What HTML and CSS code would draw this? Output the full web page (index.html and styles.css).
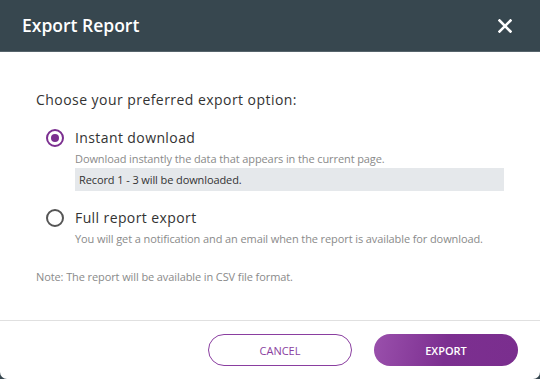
FILE: index.html
```html
<!DOCTYPE html>
<html lang="en">
<head>
  <meta charset="utf-8" />
  <title>Export Report</title>
  <link rel="stylesheet" href="styles.css">
</head>
<body>
  <div class="dialog">
    <div class="dialog-header">
      <h1>Export Report</h1>
      <button class="close" aria-label="Close">
        <svg width="14" height="14" viewBox="0 0 14 14"><path d="M1.5 1.5 L12.5 12.5 M12.5 1.5 L1.5 12.5" stroke="#fff" stroke-width="2.6" stroke-linecap="square"/></svg>
      </button>
    </div>
    <div class="dialog-body">
      <p class="question">Choose your preferred export option:</p>
      <label class="option">
        <span class="radio checked"></span>
        <span class="option-text">
          <span class="option-title">Instant download</span>
          <span class="option-desc">Download instantly the data that appears in the current page.</span>
          <span class="record">Record 1 - 3 will be downloaded.</span>
        </span>
      </label>
      <label class="option">
        <span class="radio"></span>
        <span class="option-text">
          <span class="option-title">Full report export</span>
          <span class="option-desc">You will get a notification and an email when the report is available for download.</span>
        </span>
      </label>
      <p class="note">Note: The report will be available in CSV file format.</p>
    </div>
    <div class="dialog-footer">
      <button class="btn btn-cancel">CANCEL</button>
      <button class="btn btn-export">EXPORT</button>
    </div>
  </div>
</body>
</html>
```

FILE: styles.css
```css
:root {
  --dark: #37474f;
  --purple: #7b2f90;
  --text: #333;
  --text-light: #8a8a8a;
}
html, body {
  margin: 0;
  padding: 0;
  height: 100%;
  background: var(--dark);
  font-family: 'Open Sans', 'Noto Sans', Arial, sans-serif;
  color: var(--text);
}
.dialog {
  width: 540px;
  height: 379px;
  display: flex;
  flex-direction: column;
  background: #fff;
  border-radius: 0 0 7px 7px;
  overflow: hidden;
}
.dialog-header {
  height: 51px;
  flex: none;
  display: flex;
  align-items: center;
  justify-content: space-between;
  padding: 0 28px 0 22px;
  background: var(--dark);
  border-bottom: 1px solid #56646b;
}
.dialog-header h1 {
  margin: 0 0 1px 0;
  font-size: 17.5px;
  font-weight: 600;
  color: #fff;
}
.close {
  background: none;
  border: none;
  padding: 0;
  display: flex;
  cursor: pointer;
}
.dialog-body {
  flex: 1;
  padding: 38px 36px 0 36px;
}
.question {
  margin: 0 0 18px 0;
  font-size: 14px;
  line-height: 20px;
  letter-spacing: 0.45px;
}
.option {
  display: flex;
  gap: 11px;
  margin-bottom: 17px;
  padding-left: 10px;
  cursor: pointer;
}
.radio {
  flex: none;
  width: 18px;
  height: 18px;
  border: 2px solid #555;
  border-radius: 50%;
  margin-top: 1px;
  box-sizing: border-box;
  position: relative;
}
.radio.checked {
  border-color: var(--purple);
}
.radio.checked::after {
  content: "";
  position: absolute;
  left: 3px;
  top: 3px;
  width: 8px;
  height: 8px;
  border-radius: 50%;
  background: var(--purple);
}
.option-text {
  display: flex;
  flex-direction: column;
  flex: 1;
}
.option-title {
  font-size: 14px;
  line-height: 20px;
  letter-spacing: 0.4px;
}
.option-desc {
  font-size: 11px;
  line-height: 15px;
  margin-top: 3px;
  color: var(--text-light);
  letter-spacing: -0.1px;
}
.record {
  margin-top: 2px;
  background: #e5e8eb;
  font-size: 11px;
  line-height: 23px;
  padding: 0 4px;
  width: 421px;
  letter-spacing: -0.1px;
}
.note {
  margin: 23px 0 0 0;
  font-size: 11px;
  line-height: 15px;
  color: var(--text-light);
  letter-spacing: -0.1px;
}
.dialog-footer {
  flex: none;
  height: 59px;
  box-sizing: border-box;
  border-top: 1px solid #e0e0e0;
  display: flex;
  justify-content: flex-end;
  align-items: flex-start;
  gap: 22px;
  padding: 13px 22px 0 0;
}
.btn {
  width: 144px;
  height: 32px;
  border-radius: 16px;
  font-family: inherit;
  font-size: 11px;
  cursor: pointer;
}
.btn-cancel {
  background: #fff;
  border: 1px solid #8a3ea0;
  color: #8a3ea0;
}
.btn-export {
  border: none;
  background: linear-gradient(100deg, #9a50ac 0%, #7c2f90 50%, #7a2e8e 100%);
  color: #fff;
  font-weight: 600;
}
```
